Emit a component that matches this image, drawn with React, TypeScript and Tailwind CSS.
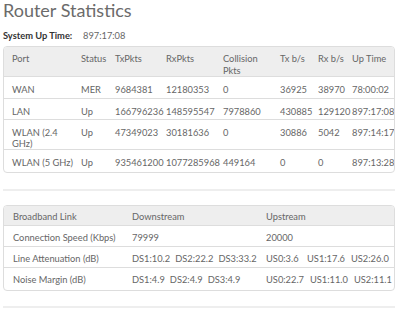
import React from 'react';

const ports = [
  { port: 'WAN', status: 'MER', tx: '9684381', rx: '12180353', col: '0', txb: '36925', rxb: '38970', up: '78:00:02', h: 'h-[22px]' },
  { port: 'LAN', status: 'Up', tx: '166796236', rx: '148595547', col: '7978860', txb: '430885', rxb: '129120', up: '897:17:08', h: 'h-[21px]' },
  { port: 'WLAN (2.4\nGHz)', status: 'Up', tx: '47349023', rx: '30181636', col: '0', txb: '30886', rxb: '5042', up: '897:14:17', h: 'h-[30px]' },
  { port: 'WLAN (5 GHz)', status: 'Up', tx: '935461200', rx: '1077285968', col: '449164', txb: '0', rxb: '0', up: '897:13:28', h: 'h-[23px]' },
];

const portCols = 'grid grid-cols-[77px_34px_51px_57px_57px_38px_34px_1fr]';
const linkCols = 'grid grid-cols-[128px_134px_1fr]';

export default function App() {
  return (
    <div className="w-[400px] h-[322px] bg-white pl-[3px] pr-[5px] text-[#666] text-[9.3px] font-['Lato',sans-serif] overflow-hidden">
      <h1 className="text-[18px] leading-[20px] text-[#6b6b6b] font-normal">Router Statistics</h1>

      <div className="flex mt-[10px] leading-[11px]">
        <span className="w-[80px] font-bold text-[#333]">System Up Time:</span>
        <span>897:17:08</span>
      </div>

      {/* port stats */}
      <div className="mt-[5px] border border-[#ddd] rounded-[4px] overflow-hidden">
        <div className={`${portCols} h-[29px] bg-[#eeeeee] pt-[6px] leading-[12px]`}>
          <div className="pl-[8px]">Port</div>
          <div>Status</div>
          <div>TxPkts</div>
          <div>RxPkts</div>
          <div>Collision<br />Pkts</div>
          <div>Tx b/s</div>
          <div>Rx b/s</div>
          <div>Up Time</div>
        </div>
        {ports.map((p) => (
          <div key={p.port} className={`${portCols} ${p.h} border-t border-[#ddd] pt-[7px] leading-[11px] whitespace-pre`}>
            <div className="pl-[8px]">{p.port}</div>
            <div>{p.status}</div>
            <div>{p.tx}</div>
            <div>{p.rx}</div>
            <div>{p.col}</div>
            <div>{p.txb}</div>
            <div>{p.rxb}</div>
            <div>{p.up}</div>
          </div>
        ))}
      </div>

      <div className="mt-[16px] h-[2px] bg-[#eeeeee]" />

      {/* broadband link */}
      <div className="mt-[14px] border border-[#ddd] rounded-[4px] overflow-hidden leading-[11px]">
        <div className={`${linkCols} h-[19px] bg-[#eeeeee] pt-[5px]`}>
          <div className="pl-[9px]">Broadband Link</div>
          <div>Downstream</div>
          <div>Upstream</div>
        </div>
        <div className={`${linkCols} h-[21px] border-t border-[#ddd] pt-[6px]`}>
          <div className="pl-[9px]">Connection Speed (Kbps)</div>
          <div>79999</div>
          <div>20000</div>
        </div>
        <div className={`${linkCols} h-[21px] border-t border-[#ddd] pt-[6px] whitespace-nowrap`}>
          <div className="pl-[9px]">Line Attenuation (dB)</div>
          <div className="flex gap-[5px]">
            <span>DS1:10.2</span>
            <span>DS2:22.2</span>
            <span>DS3:33.2</span>
          </div>
          <div className="flex gap-[6px]">
            <span className="min-w-[35px]">US0:3.6</span>
            <span>US1:17.6</span>
            <span>US2:26.0</span>
          </div>
        </div>
        <div className={`${linkCols} h-[23px] border-t border-[#ddd] pt-[6px] whitespace-nowrap`}>
          <div className="pl-[9px]">Noise Margin (dB)</div>
          <div className="flex gap-[5px]">
            <span>DS1:4.9</span>
            <span>DS2:4.9</span>
            <span>DS3:4.9</span>
          </div>
          <div className="flex gap-[6px]">
            <span className="min-w-[35px]">US0:22.7</span>
            <span>US1:11.0</span>
            <span>US2:11.1</span>
          </div>
        </div>
      </div>

      <div className="mt-[15px] h-[2px] bg-[#eeeeee]" />
    </div>
  );
}
